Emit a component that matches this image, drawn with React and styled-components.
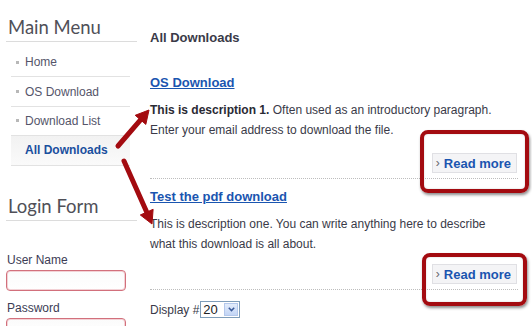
import React from "react";
import styled, { createGlobalStyle } from "styled-components";

const Global = createGlobalStyle`
  html, body { margin: 0; padding: 0; background: #fff; }
  body { font-family: "Liberation Sans", Arial, sans-serif; color: #3a3a48; overflow: hidden; }
  #root { width: 532px; height: 326px; position: relative; overflow: hidden; }
`;

const Page = styled.div`
  display: flex;
  width: 532px;
  height: 326px;
  position: relative;
`;

const Sidebar = styled.aside`
  width: 136px;
  flex: none;
  padding-left: 6px;
  box-sizing: border-box;
`;

const ModuleTitle = styled.h3`
  margin: ${(p) => p.$top}px 0 0 0;
  padding: 0 0 1px 2px;
  font-family: Lato, "Open Sans", sans-serif;
  font-weight: 400;
  font-size: 18.5px;
  line-height: 26px;
  color: #505058;
  border-bottom: 1px solid #dcdcdc;
  width: 129px;
`;

const Menu = styled.ul`
  list-style: none;
  margin: 6px 0 0 5px;
  padding: 0;
  width: 119px;
`;

const MenuItem = styled.li`
  height: 28.4px;
  border-bottom: 1px solid #e2e2e2;
  display: flex;
  align-items: center;
  gap: 6px;
  padding-left: ${(p) => (p.$active ? "14px" : "5px")};
  font-size: 12px;
  font-weight: ${(p) => (p.$active ? 700 : 400)};
  color: ${(p) => (p.$active ? "#1a4f9e" : "#55556a")};
  background: ${(p) => (p.$active ? "linear-gradient(#f2f2f2, #fafafa)" : "transparent")};
`;

const Bullet = styled.span`
  width: 3px;
  height: 3px;
  background: #b8b8b8;
  flex: none;
`;

const Label = styled.div`
  font-size: 12px;
  line-height: 16px;
  color: #3c3c55;
  margin-top: ${(p) => p.$top}px;
  padding-left: 1px;
`;

const Input = styled.div`
  margin-top: 2px;
  width: 120px;
  height: 21px;
  box-sizing: border-box;
  border: 1px solid #d2707c;
  border-radius: 4px;
  background: linear-gradient(#fbfbfb, #ffffff);
  box-shadow: inset 0 0 0 1px #f3d2d6;
`;

const Main = styled.main`
  flex: 1;
  padding: 30px 0 0 14px;
  box-sizing: border-box;
`;

const PageTitle = styled.h2`
  margin: 0;
  font-size: 13px;
  line-height: 16px;
  font-weight: 700;
  color: #3a3a48;
`;

const Item = styled.article`
  width: 368px;
  margin-top: ${(p) => p.$top}px;
`;

const ItemTitle = styled.a`
  display: inline-block;
  font-size: 13px;
  line-height: 16px;
  font-weight: 700;
  color: #1a55b0;
  text-decoration: underline;
`;

const Desc = styled.p`
  margin: 9px 0 0 0;
  font-size: 12px;
  line-height: 20px;
  color: #3a3a48;
  b { color: #2a2a34; }
`;

const ReadRow = styled.div`
  display: flex;
  justify-content: flex-end;
  margin-top: ${(p) => p.$top}px;
  border-bottom: 1px dotted #bdbdbd;
  padding-bottom: 5px;
`;

const ReadMore = styled.a`
  display: flex;
  align-items: center;
  gap: 4px;
  height: 20px;
  box-sizing: border-box;
  padding: 0 5px 0 3px;
  background: #f4f4f6;
  border: 1px solid #e0e0e4;
  font-size: 13px;
  font-weight: 700;
  color: #1a55b0;
  margin-right: 1px;
  span { color: #666; font-size: 12px; font-weight: 400; }
`;

const DisplayRow = styled.div`
  margin-top: 11px;
  display: flex;
  align-items: center;
  font-size: 12px;
  color: #3a3a48;
`;

const Select = styled.div`
  margin-left: 1px;
  width: 40px;
  height: 17px;
  box-sizing: border-box;
  border: 1px solid #7f9db9;
  display: flex;
  align-items: center;
  justify-content: space-between;
  font-size: 13px;
  padding-left: 2px;
  background: #fff;
  color: #222;
`;

const SelectBtn = styled.span`
  width: 14px;
  height: 13px;
  margin-right: 1px;
  background: linear-gradient(#e3ecfb, #c3d5f5);
  border: 1px solid #b4c8ec;
  box-sizing: border-box;
  display: flex;
  align-items: center;
  justify-content: center;
`;

const Callout = styled.div`
  position: absolute;
  left: ${(p) => p.$x}px;
  top: ${(p) => p.$y}px;
  width: ${(p) => p.$w}px;
  height: ${(p) => p.$h}px;
  box-sizing: border-box;
  border: 4px solid #a30b10;
  border-radius: 8px;
  box-shadow: 1px 2px 3px rgba(0,0,0,0.45), inset 0 0 2px rgba(0,0,0,0.2);
  pointer-events: none;
`;

const ArrowLayer = styled.svg`
  position: absolute;
  left: 0;
  top: 0;
  pointer-events: none;
`;

function Arrow({ x1, y1, x2, y2 }) {
  const dx = x2 - x1, dy = y2 - y1;
  const len = Math.hypot(dx, dy);
  const ux = dx / len, uy = dy / len;
  const hl = 13, hw = 7;
  const bx = x2 - ux * hl, by = y2 - uy * hl;
  const px = -uy, py = ux;
  return (
    <g>
      <line x1={x1} y1={y1} x2={bx + ux * 1} y2={by + uy * 1} stroke="#a30b10" strokeWidth="5" strokeLinecap="round" />
      <polygon
        points={`${x2},${y2} ${bx + px * hw},${by + py * hw} ${bx - px * hw},${by - py * hw}`}
        fill="#a30b10"
        stroke="#a30b10"
        strokeWidth="1"
        strokeLinejoin="round"
      />
    </g>
  );
}

export default function App() {
  return (
    <Page>
      <Global />
      <Sidebar>
        <ModuleTitle $top={14}>Main Menu</ModuleTitle>
        <Menu>
          <MenuItem><Bullet />Home</MenuItem>
          <MenuItem><Bullet />OS Download</MenuItem>
          <MenuItem><Bullet />Download List</MenuItem>
          <MenuItem $active>All Downloads</MenuItem>
        </Menu>
        <ModuleTitle $top={27}>Login Form</ModuleTitle>
        <Label $top={31}>User Name</Label>
        <Input />
        <Label $top={9}>Password</Label>
        <Input />
      </Sidebar>
      <Main>
        <PageTitle>All Downloads</PageTitle>
        <Item $top={27}>
          <ItemTitle>OS Download</ItemTitle>
          <Desc>
            <b>This is description 1.</b> Often used as an introductory paragraph.
            <br />
            Enter your email address to download the file.
          </Desc>
          <ReadRow $top={13}>
            <ReadMore><span>›</span>Read more</ReadMore>
          </ReadRow>
        </Item>
        <Item $top={8}>
          <ItemTitle>Test the pdf download</ItemTitle>
          <Desc>
            This is description one. You can write anything here to describe
            <br />
            what this download is all about.
          </Desc>
          <ReadRow $top={10}>
            <ReadMore><span>›</span>Read more</ReadMore>
          </ReadRow>
        </Item>
        <DisplayRow>
          Display #
          <Select>
            20
            <SelectBtn>
              <svg width="7" height="5" viewBox="0 0 7 5">
                <path d="M0.8 0.8 L3.5 3.6 L6.2 0.8" fill="none" stroke="#3a5a9a" strokeWidth="1.5" />
              </svg>
            </SelectBtn>
          </Select>
        </DisplayRow>
      </Main>
      <Callout $x={420} $y={130} $w={109} $h={63} />
      <Callout $x={422} $y={253} $w={105} $h={53} />
      <ArrowLayer width="532" height="326">
        <Arrow x1={118} y1={146} x2={149} y2={110} />
        <Arrow x1={124} y1={161} x2={152} y2={224} />
      </ArrowLayer>
    </Page>
  );
}
